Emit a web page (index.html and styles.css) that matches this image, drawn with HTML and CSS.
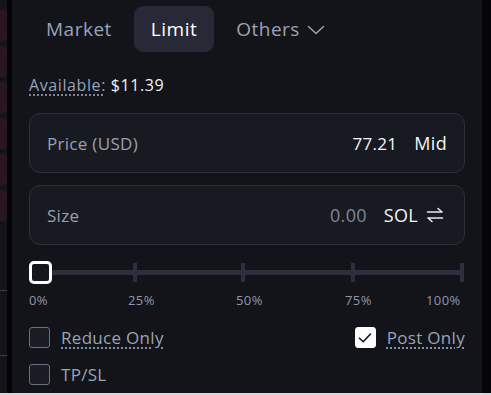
FILE: index.html
```html
<!DOCTYPE html>
<html lang="en">
<head>
  <meta charset="UTF-8">
  <meta name="viewport" content="width=device-width, initial-scale=1.0">
  <title>Order Form</title>
  <link rel="stylesheet" href="styles.css">
</head>
<body>
  <div class="page">
    <div class="book">
      <div class="book-row"></div>
      <div class="book-row"></div>
      <div class="book-row"></div>
      <div class="book-row"></div>
      <div class="book-row"></div>
      <div class="book-row"></div>
      <div class="book-line line-a"></div>
      <div class="book-line line-b"></div>
    </div>

    <div class="panel">
      <div class="tabs">
        <button class="tab">Market</button>
        <button class="tab active">Limit</button>
        <button class="tab">Others
          <svg class="chev" width="18" height="10" viewBox="0 0 18 10"><path d="M1.5 1.5 L9 8.5 L16.5 1.5" fill="none" stroke="currentColor" stroke-width="1.5" stroke-linecap="round" stroke-linejoin="round"/></svg>
        </button>
      </div>

      <div class="available"><span class="dotted">Available:</span> <span class="amount">$11.39</span></div>

      <div class="field">
        <span class="field-label">Price (USD)</span>
        <span class="field-value">77.21</span>
        <span class="field-unit">Mid</span>
      </div>

      <div class="field size-field">
        <span class="field-label">Size</span>
        <span class="field-value muted">0.00</span>
        <span class="field-unit">SOL</span>
        <svg class="swap" width="18" height="16" viewBox="0 0 18 16"><path d="M1.5 5 H16 M12 1.5 L16 5" fill="none" stroke="currentColor" stroke-width="1.6" stroke-linecap="round" stroke-linejoin="round"/><path d="M16.5 11 H2 M6 14.5 L2 11" fill="none" stroke="currentColor" stroke-width="1.6" stroke-linecap="round" stroke-linejoin="round"/></svg>
      </div>

      <div class="slider">
        <div class="track">
          <span class="thumb"></span>
          <span class="tick t25"></span>
          <span class="tick t50"></span>
          <span class="tick t75"></span>
          <span class="tick t100"></span>
        </div>
        <div class="marks">
          <span>0%</span>
          <span>25%</span>
          <span>50%</span>
          <span>75%</span>
          <span>100%</span>
        </div>
      </div>

      <div class="options">
        <label class="check"><span class="box"></span><span class="dotted">Reduce Only</span></label>
        <label class="check"><span class="box on">
          <svg width="14" height="12" viewBox="0 0 14 12"><path d="M1.5 6.2 L5.2 9.8 L12.5 2" fill="none" stroke="#15161c" stroke-width="1.6" stroke-linecap="round" stroke-linejoin="round"/></svg>
        </span><span class="dotted">Post Only</span></label>
      </div>
      <div class="options">
        <label class="check"><span class="box"></span><span>TP/SL</span></label>
      </div>
    </div>
    <div class="edge"></div>
  </div>
  <div class="bottom-bar"></div>
</body>
</html>
```

FILE: styles.css
```css
body {
  margin: 0;
  background: #050508;
  font-family: "Open Sans", "Liberation Sans", sans-serif;
  overflow: hidden;
}

.page {
  display: flex;
  height: 393px;
}

.book {
  width: 7px;
  position: relative;
  background: #14141a;
  padding-top: 10px;
  display: flex;
  flex-direction: column;
  gap: 5px;
  margin-right: 5px;
}

.book-row {
  height: 31px;
  background: #2a1620;
  border-radius: 0 4px 4px 0;
}

.book-line {
  position: absolute;
  left: 0;
  width: 7px;
  height: 1px;
  background: #3a3c48;
}

.line-a { top: 290px; }
.line-b { top: 355px; }

.panel {
  width: 470px;
  background: #131419;
  padding: 0 17px 0 17px;
  box-sizing: border-box;
}

.edge {
  flex: 1;
  background: #050508;
}

.bottom-bar {
  height: 2px;
  background: #d9d9dc;
}

.tabs {
  display: flex;
  padding-top: 6px;
}

.tab {
  height: 46px;
  border: none;
  background: transparent;
  color: #9aa3b8;
  font-family: inherit;
  font-size: 19px;
  letter-spacing: 0.5px;
  padding: 0 17px;
  border-radius: 9px;
  display: flex;
  align-items: center;
  gap: 7px;
  margin-right: 5px;
}

.tab.active {
  background: #272936;
  color: #ffffff;
}

.chev {
  margin-top: 2px;
}

.available {
  margin-top: 22px;
  color: #9aa3b8;
  font-size: 16px;
  letter-spacing: 0.6px;
  margin-bottom: 17px;
}

.available .amount {
  color: #f2f3f6;
}

.dotted {
  text-decoration: underline dotted #9aa3b8;
  text-underline-offset: 4px;
}

.field {
  height: 58px;
  border: 1px solid #2d303d;
  border-radius: 11px;
  background: #181a21;
  display: flex;
  align-items: center;
  padding: 0 17px 0 17px;
  margin-bottom: 12px;
  font-size: 17px;
  letter-spacing: 0.3px;
}

.size-field {
  padding-right: 20px;
}

.field-label {
  flex: 1;
  color: #9aa0ae;
}

.field-value {
  color: #f4f5f7;
  margin-right: 17px;
}

.field-value.muted {
  color: #7f8596;
  font-size: 18px;
}

.field-unit {
  color: #f4f5f7;
  font-size: 18px;
}

.swap {
  color: #e8e9ee;
  margin-left: 8px;
}

.slider {
  margin-top: 16px;
}

.track {
  position: relative;
  height: 23px;
  margin-right: 2px;
}

.track::before {
  content: "";
  position: absolute;
  left: 10px;
  right: 0;
  top: 9px;
  height: 5px;
  background: #2d2f3c;
}

.thumb {
  position: absolute;
  left: 0;
  top: 0;
  width: 17px;
  height: 17px;
  border: 3px solid #ffffff;
  border-radius: 5px;
  background: #16171d;
}

.tick {
  position: absolute;
  top: 2px;
  width: 4px;
  height: 19px;
  background: #2d2f3c;
}

.t25 { left: 104px; }
.t50 { left: 212px; }
.t75 { left: 322px; }
.t100 { left: 431px; }

.marks {
  display: grid;
  grid-template-columns: 99px 108px 109px 81px auto;
  color: #8f96a8;
  font-size: 13px;
  letter-spacing: 0.4px;
  margin-top: 7px;
}

.options {
  display: flex;
  justify-content: space-between;
  margin-top: 17px;
}

.options + .options {
  margin-top: 14px;
}

.check {
  display: flex;
  align-items: center;
  gap: 11px;
  color: #9aa3b8;
  font-size: 17px;
  letter-spacing: 0.3px;
}

.box {
  width: 19px;
  height: 19px;
  border: 1.5px solid #6b7180;
  border-radius: 3px;
  background: #1a1c23;
  display: flex;
  align-items: center;
  justify-content: center;
}

.box.on {
  background: #ffffff;
  border-color: #ffffff;
}
```
